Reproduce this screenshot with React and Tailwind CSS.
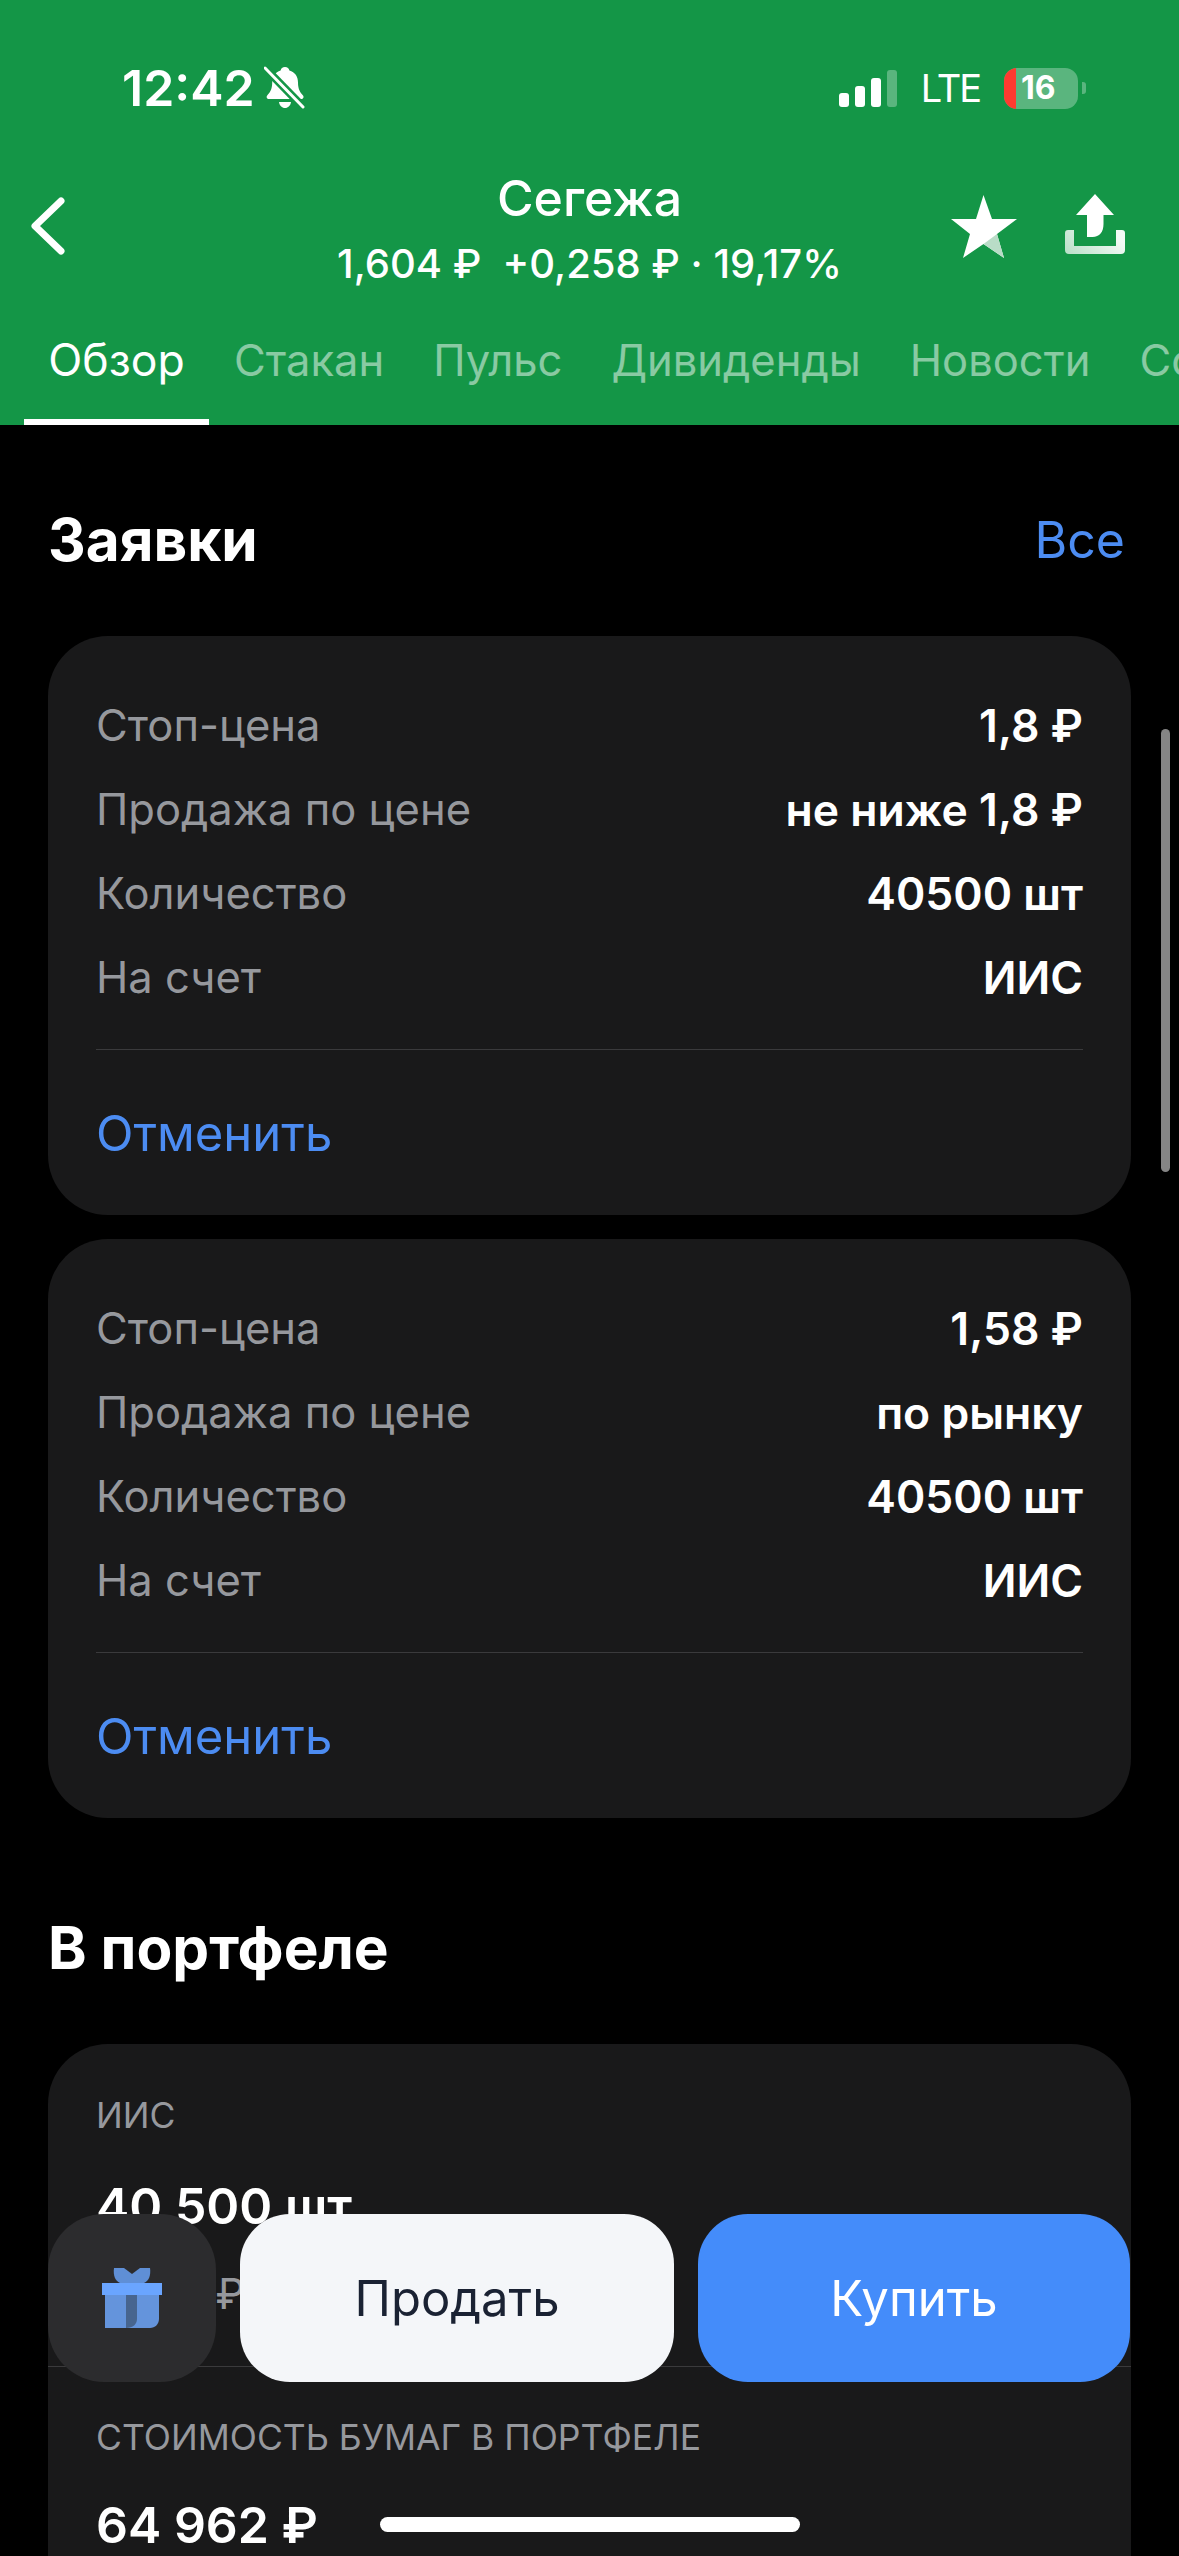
import React from "react";

const font = { fontFamily: "Inter, 'Noto Sans', sans-serif" };

function Row({ label, value }) {
  return (
    <div className="flex h-[84px] items-center justify-between">
      <span className="text-[43.5px] text-[#96989d]">{label}</span>
      <span className="text-[44.5px] font-semibold text-white">{value}</span>
    </div>
  );
}

function OrderCard({ stop, sale }) {
  return (
    <div className="h-[579px] rounded-[60px] bg-[#19191a] pl-[48px] pr-[48px] pt-[48px]">
      <Row label="Стоп-цена" value={stop} />
      <Row label="Продажа по цене" value={sale} />
      <Row label="Количество" value="40500 шт" />
      <Row label="На счет" value="ИИС" />
      <div className="mt-[29px] h-[1px] bg-[#3a3a3c]" />
      <div className="flex h-[168px] items-center text-[49px] text-[#4c8cf2]">Отменить</div>
    </div>
  );
}

function Signal() {
  return (
    <div className="flex items-end gap-[6px]">
      <div className="h-[14px] w-[10px] rounded-[3px] bg-white" />
      <div className="h-[21px] w-[10px] rounded-[3px] bg-white" />
      <div className="h-[29px] w-[10px] rounded-[3px] bg-white" />
      <div className="h-[37px] w-[10px] rounded-[3px] bg-white/30" />
    </div>
  );
}

function Battery() {
  return (
    <div className="flex items-center gap-[4px]">
      <div className="relative flex h-[41px] w-[74px] items-center overflow-hidden rounded-[13px] bg-white/30">
        <div className="h-full w-[12px] bg-[#ff3b30]" />
        <span className="ml-[5px] text-[32px] font-bold leading-none text-white">16</span>
      </div>
      <div className="h-[12px] w-[4px] rounded-r-[3px] bg-white/30" />
    </div>
  );
}

function MutedBell() {
  return (
    <svg width="42" height="44" viewBox="0 0 42 44" fill="none">
      <path d="M21 1c2.500 0 4 1.600 4.400 3.400 5.600 1.600 8.600 6 8.600 12 0 7 2.400 10 5 13 1.200 1.400.4 3.600-1.800 3.600H5c-2.200 0-3-2.200-1.800-3.600 2.600-3 5-6 5-13 0-6 3-10.400 8.400-12C17 2.600 18.500 1 21 1z" fill="#fff" />
      <path d="M15 36h12c-.4 3.600-3 6-6 6s-5.600-2.400-6-6z" fill="#fff" />
      <path d="M3 4 40 42" stroke="#149647" strokeWidth="8" />
      <path d="M1 2 39 41" stroke="#fff" strokeWidth="3" strokeLinecap="round" />
    </svg>
  );
}

function Star() {
  return (
    <svg width="66" height="63" viewBox="0 0 66 63">
      <path d="M32.500 0 41 24h25L46 39l7 24-20.500-14L12 63l7-24L0 24h25z" fill="#fff" />
      <path d="M46 39l7 24-20.500-14z" fill="#b9dcc7" />
    </svg>
  );
}

function Share() {
  return (
    <svg width="60" height="61" viewBox="0 0 60 61">
      <defs>
        <linearGradient id="tray" x1="0" y1="1" x2="1" y2="0.6">
          <stop offset="0" stopColor="#fff" stopOpacity="0.7" />
          <stop offset="1" stopColor="#fff" stopOpacity="0.95" />
        </linearGradient>
      </defs>
      <path d="M30 0 49 21H38.500v9c0 8-4 13-11 13H22V21H11z" fill="#fff" />
      <path d="M0 39a3 3 0 0 1 3-3h6v16h42V36h6a3 3 0 0 1 3 3v17a4 4 0 0 1-4 4H4a4 4 0 0 1-4-4z" fill="url(#tray)" />
    </svg>
  );
}

function Gift() {
  return (
    <svg width="60" height="60" viewBox="0 0 60 60">
      <path d="M12 0h10l8 6v9H18C13 13 11 7 12 0z" fill="#5f8fd6" />
      <path d="M48 0H38l-8 6v9h12c5-2 7-8 6-15z" fill="#5f8fd6" />
      <path d="M3 27h54v24c0 5-4 9-9 9H3z" fill="#6494dc" />
      <rect y="15" width="60" height="12" fill="#6aa5ff" />
      <path d="M24 27h11v24c0 5-4 9-11 9z" fill="#47658f" />
    </svg>
  );
}

export default function App() {
  return (
    <div className="relative h-[2556px] w-[1179px] overflow-hidden bg-black text-white" style={font}>
      <header className="h-[425px] bg-[#149647]">
        <div className="flex h-[176px] items-start justify-between pl-[122px] pr-[93px] pt-[64px]">
          <div className="flex h-[48px] items-center gap-[9px]">
            <span className="text-[50px] font-semibold leading-none">12:42</span>
            <MutedBell />
          </div>
          <div className="flex h-[48px] items-center">
            <Signal />
            <span className="ml-[24px] mr-[24px] text-[38px] font-normal leading-none tracking-[-2px]">LTE</span>
            <Battery />
          </div>
        </div>
        <div className="relative flex h-[138px] items-start justify-center">
          <svg className="absolute left-[26px] top-[18px]" width="44" height="64" viewBox="0 0 44 64" fill="none">
            <path d="M35 7 9 32l26 25" stroke="#fff" strokeWidth="7" strokeLinecap="round" strokeLinejoin="round" />
          </svg>
          <div className="flex flex-col items-center">
            <div className="text-[50px] font-medium leading-[44px]">Сегежа</div>
            <div className="mt-[20px] text-[40px] font-medium leading-[48px] whitespace-pre">1,604 ₽  +0,258 ₽ · 19,17%</div>
          </div>
          <div className="absolute left-[951px] top-[19px]"><Star /></div>
          <div className="absolute left-[1065px] top-[18px]"><Share /></div>
        </div>
        <nav className="flex h-[111px] overflow-hidden pl-[24px]">
          <div className="flex h-full w-[185px] shrink-0 items-center justify-center border-b-[6px] border-white pb-[12px] text-[44.5px]">Обзор</div>
          <div className="flex h-full shrink-0 items-center gap-[49px] pb-[18px] pl-[25px] text-[43.5px] text-white/50">
            <span>Стакан</span>
            <span>Пульс</span>
            <span>Дивиденды</span>
            <span>Новости</span>
            <span>События</span>
          </div>
        </nav>
      </header>

      <main className="px-[48px]">
        <section>
          <div className="flex h-[211px] items-center justify-between pr-[6px] pt-[19px]">
            <h2 className="text-[58.5px] font-bold">Заявки</h2>
            <span className="text-[50px] text-[#4c8cf2]">Все</span>
          </div>
          <div className="flex flex-col gap-[24px]">
            <OrderCard stop="1,8 ₽" sale="не ниже 1,8 ₽" />
            <OrderCard stop="1,58 ₽" sale="по рынку" />
          </div>
        </section>
        <section>
          <div className="flex h-[226px] items-center pt-[34px]">
            <h2 className="text-[58.5px] font-bold">В портфеле</h2>
          </div>
          <div className="h-[600px] rounded-t-[60px] bg-[#19191a] px-[48px] pt-[49px]">
            <div className="text-[35.5px] leading-[46px] text-[#96989d]">ИИС</div>
            <div className="mt-[35px] text-[50px] font-semibold leading-[64px]">40 500 шт</div>
            <div className="mt-[30px] text-[42px] leading-[52px] text-[#96989d]">1,604 ₽</div>
            <div className="-mx-[48px] mt-[46px] h-[1px] bg-[#3a3a3c]" />
            <div className="mt-[48px] text-[35.5px] leading-[46px] text-[#96989d]">СТОИМОСТЬ БУМАГ В ПОРТФЕЛЕ</div>
            <div className="mt-[32px] text-[50px] font-semibold leading-[64px]">64 962 ₽</div>
          </div>
        </section>
      </main>

      <div className="absolute left-[1161px] top-[729px] h-[443px] w-[9px] rounded-full bg-[#858585]" />

      <div className="absolute left-[48px] top-[2214px] flex h-[168px] w-[1082px] gap-[24px]">
        <div className="flex w-[168px] shrink-0 items-center justify-center rounded-[56px] bg-[#2c2c2e]"><Gift /></div>
        <div className="flex w-[434px] shrink-0 items-center justify-center rounded-[50px] bg-[#f4f6f9] pt-[2px] text-[49px] text-[#1a2233]">Продать</div>
        <div className="flex flex-1 items-center justify-center rounded-[50px] bg-[#448cfa] pt-[2px] text-[49px] text-white">Купить</div>
      </div>

      <div className="absolute left-[380px] top-[2517px] h-[15px] w-[420px] rounded-full bg-white" />
    </div>
  );
}
